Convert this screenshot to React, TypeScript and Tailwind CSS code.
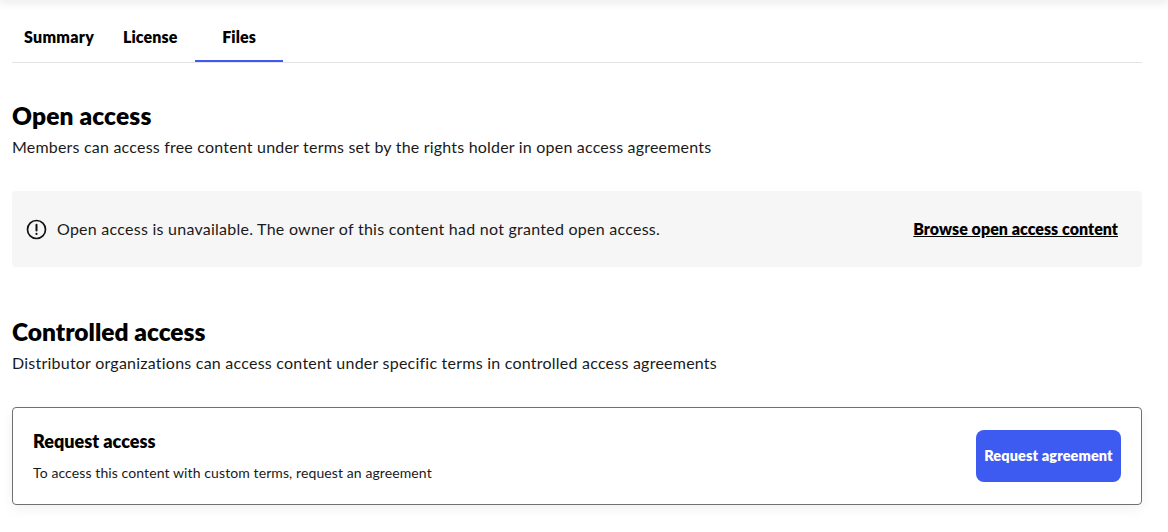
export default function App() {
  const font = { fontFamily: '"Lato", "Noto Sans", sans-serif' };
  return (
    <div style={font} className="relative w-[1168px] h-[532px] overflow-hidden bg-white text-black">
      <div className="h-0 shadow-[0_0_8px_2px_rgba(0,0,0,0.14)]" />
      <div className="w-[1130px] ml-3">
        <div className="flex h-[63px] border-b border-[#e3e3e8] text-[16px] font-extrabold">
          <div className="w-[94px] pl-3 pt-[27px] leading-[20px] tracking-[0.3px]">Summary</div>
          <div className="w-[89px] pl-[17px] pt-[27px] leading-[20px] tracking-[0.1px]">License</div>
          <div className="w-[88px] h-[62px] text-center pt-[27px] leading-[20px] tracking-[0.1px] border-b-2 border-[#3d5af1]">Files</div>
        </div>
        <h2 className="mt-[38px] text-[24.5px] leading-[30px] tracking-[0.15px] font-extrabold">Open access</h2>
        <p className="mt-[5px] text-[16px] leading-[22px] tracking-[0.2px] text-[#1a1a1a]">Members can access free content under terms set by the rights holder in open access agreements</p>
        <div className="mt-[33px] h-[76px] rounded bg-[#f6f6f6] flex items-center pl-[14px] pr-6">
          <svg width="21" height="21" viewBox="0 0 21 21" fill="none" stroke="#111" strokeWidth="1.7" strokeLinecap="round">
            <circle cx="10.5" cy="10.5" r="9" />
            <path d="M10.5 5.8v5.6" strokeWidth="2" />
            <path d="M10.5 14.9v.1" strokeWidth="2.2" />
          </svg>
          <span className="ml-[10px] text-[16px] tracking-[0.25px] text-[#1a1a1a]">Open access is unavailable. The owner of this content had not granted open access.</span>
          <a className="ml-auto text-[16px] tracking-[0.03px] font-extrabold underline">Browse open access content</a>
        </div>
        <h2 className="mt-[50px] text-[24.5px] leading-[30px] font-extrabold">Controlled access</h2>
        <p className="mt-[5px] text-[16px] leading-[22px] tracking-[0.23px] text-[#1a1a1a]">Distributor organizations can access content under specific terms in controlled access agreements</p>
        <div className="mt-[33px] h-[98px] rounded border border-[#707070] flex items-center justify-between pl-5 pr-5 shadow-[0_4px_12px_rgba(0,0,0,0.06)]">
          <div>
            <div className="text-[18px] leading-[22px] font-extrabold">Request access</div>
            <div className="mt-[12px] text-[14px] leading-[18px] tracking-[0.1px] text-[#1a1a1a]">To access this content with custom terms, request an agreement</div>
          </div>
          <button className="w-[145px] h-[52px] rounded-lg bg-[#3d5af1] text-white text-[14.5px] tracking-[0.1px] font-extrabold">Request agreement</button>
        </div>
      </div>
    </div>
  );
}
